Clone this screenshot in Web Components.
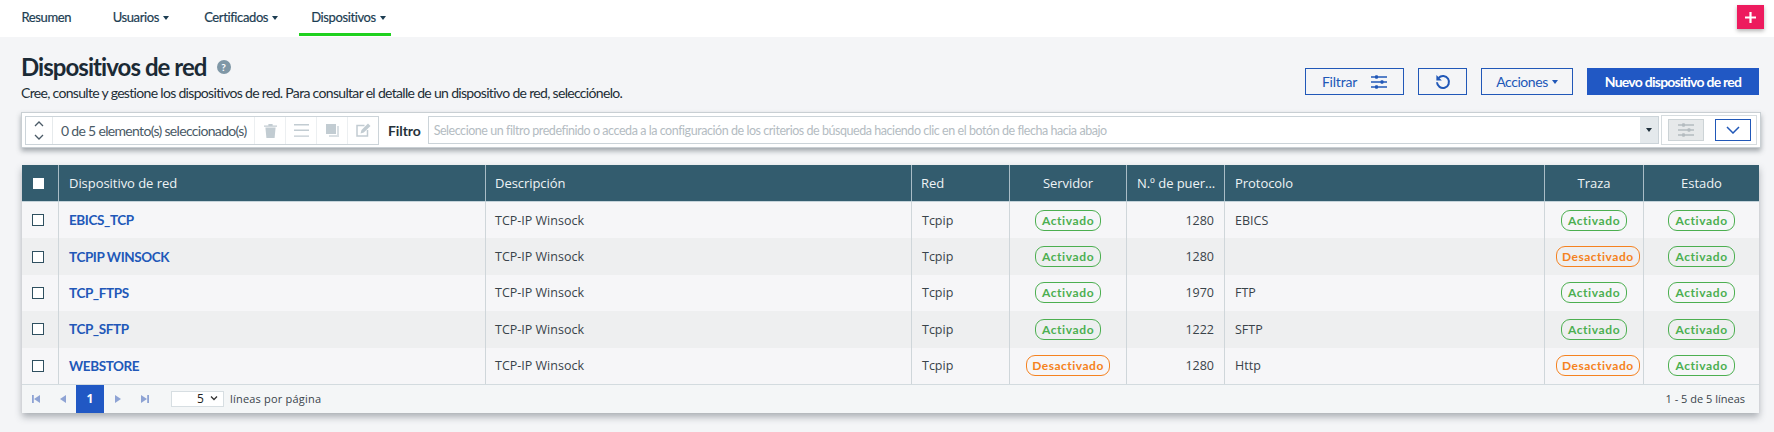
<!DOCTYPE html>
<html lang="es"><head><meta charset="utf-8"><title>Dispositivos de red</title>
<style>
html,body{margin:0;padding:0;height:432px;overflow:hidden;background:#f4f5f7;font-family:"Lato","Liberation Sans",sans-serif;}
x-app{display:block}
</style></head><body>
<x-app>
  <x-nav>
    <x-nav-item style="margin-right:16.5px">Resumen</x-nav-item>
    <x-nav-item caret style="margin-right:16.6px">Usuarios</x-nav-item>
    <x-nav-item caret style="margin-right:15px">Certificados</x-nav-item>
    <x-nav-item caret active>Dispositivos</x-nav-item>
  </x-nav>
  <x-page>
    <x-page-head heading="Dispositivos de red" text="Cree, consulte y gestione los dispositivos de red. Para consultar el detalle de un dispositivo de red, selecciónelo.">
      <x-btn style="width:99px"><span style="letter-spacing:-.2px">Filtrar</span><x-icon name="sliders" style="margin-left:14px"></x-icon></x-btn>
      <x-btn style="width:49px"><x-icon name="undo"></x-icon></x-btn>
      <x-btn style="width:92px" caret>Acciones</x-btn>
      <x-btn style="width:172px" primary>Nuevo dispositivo de red</x-btn>
    </x-page-head>
    <x-toolbar></x-toolbar>
    <x-grid>
      <x-row name="EBICS_TCP" port="1280" proto="EBICS" server="1" trace="1"></x-row>
      <x-row name="TCPIP WINSOCK" port="1280" proto="" server="1" trace="0"></x-row>
      <x-row name="TCP_FTPS" port="1970" proto="FTP" server="1" trace="1"></x-row>
      <x-row name="TCP_SFTP" port="1222" proto="SFTP" server="1" trace="1"></x-row>
      <x-row name="WEBSTORE" port="1280" proto="Http" server="0" trace="0"></x-row>
    </x-grid>
  </x-page>
</x-app>
<script>
const ICONS={
 sliders:'<svg width="16" height="14" viewBox="0 0 16 14"><g fill="none" stroke="currentColor" stroke-width="1.6"><path d="M0 2h16M0 7h16M0 12h16"/></g><g fill="currentColor"><rect x="4" y=".2" width="3" height="3.6" rx="1"/><rect x="9.5" y="5.2" width="3" height="3.6" rx="1"/><rect x="4" y="10.2" width="3" height="3.6" rx="1"/></g></svg>',
 undo:'<svg width="16" height="16" viewBox="0 0 16 16"><path d="M3.6 3.9A6 6 0 1 1 2 8.2" fill="none" stroke="currentColor" stroke-width="2"/><path d="M1.4 1v5.4h5.4z" fill="currentColor"/></svg>',
 trash:'<svg width="13" height="15" viewBox="0 0 13 15" fill="currentColor"><path d="M0 2.4h13v1.4H0zM4.4 1h4.2v1.4H4.4zM1.4 4.6h10.2L10.6 15H2.4z"/></svg>',
 lines:'<svg width="15" height="13" viewBox="0 0 15 13" fill="currentColor"><path d="M0 0h15v1.4H0zM0 5.6h15V7H0zM0 11.4h15v1.4H0z"/></svg>',
 copy:'<svg width="13" height="13" viewBox="0 0 13 13" fill="currentColor"><path d="M0 0h10v10H0z"/><path d="M11 2h2v11H3v-2h8z" opacity=".6"/></svg>',
 edit:'<svg width="15" height="14" viewBox="0 0 15 14"><path d="M8.5 2.5H1v10.5h10.500V7" fill="none" stroke="currentColor" stroke-width="1.5"/><path d="M4.5 10.500l1-3.500L12 .5l2.500 2.500L7.800 9.500z" fill="currentColor"/></svg>',
 up:'<svg width="10" height="6" viewBox="0 0 10 6"><path d="M1 5l4-4 4 4" fill="none" stroke="currentColor" stroke-width="1.300"/></svg>',
 down:'<svg width="10" height="6" viewBox="0 0 10 6"><path d="M1 1l4 4 4-4" fill="none" stroke="currentColor" stroke-width="1.300"/></svg>',
 chev:'<svg width="14" height="8" viewBox="0 0 14 8"><path d="M1 1l6 6 6-6" fill="none" stroke="currentColor" stroke-width="1.500"/></svg>',
 first:'<svg width="8" height="8" viewBox="0 0 8 8" fill="currentColor"><path d="M0 0h1.800v8H0zM8 0v8L2 4z"/></svg>',
 prev:'<svg width="6" height="8" viewBox="0 0 6 8" fill="currentColor"><path d="M6 0v8L0 4z"/></svg>',
 next:'<svg width="6" height="8" viewBox="0 0 6 8" fill="currentColor"><path d="M0 0v8l6-4z"/></svg>',
 last:'<svg width="8" height="8" viewBox="0 0 8 8" fill="currentColor"><path d="M8 0H6.200v8H8zM0 0v8l6-4z"/></svg>'
};
function def(name,css,html){
  customElements.define(name,class extends HTMLElement{
    connectedCallback(){
      if(this.shadowRoot)return;
      const r=this.attachShadow({mode:'open'});
      r.innerHTML='<style>'+css+'</style>'+(typeof html==='function'?html(this):html);
    }
  });
}
def('x-icon',':host{display:inline-flex;align-items:center;justify-content:center;line-height:0}',h=>ICONS[h.getAttribute('name')]);
def('x-nav',`:host{display:flex;height:37px;background:#fff;padding-left:9px;box-sizing:border-box;position:relative}
 .fab{position:absolute;left:1737px;top:5px;width:27px;height:24px;background:#ed1b5e;color:#fff;display:flex;align-items:center;justify-content:center;box-shadow:0 2px 4px rgba(0,0,0,.3)}`,
 '<slot></slot><div class="fab"><svg width="11" height="11" viewBox="0 0 11 11"><path d="M5.500 0v11M0 5.500h11" stroke="#fff" stroke-width="2.200"/></svg></div>');
def('x-nav-item',`:host{display:block;height:36px;box-sizing:border-box;padding:0 12.5px;font:400 13px/35px Lato,sans-serif;color:#1c3d52;letter-spacing:-.38px;white-space:nowrap;-webkit-text-stroke:.2px #1c3d52}
 :host([caret]){padding-right:6px}
 :host([active]){border-bottom:3px solid #1fd11f;padding-left:12px;padding-right:5px}
 .c{display:inline-block;border:3px solid transparent;border-top:4px solid #1c3d52;border-bottom:0;margin-left:4px;vertical-align:2px}`,
 h=>'<span class="t"><slot></slot></span>'+(h.hasAttribute('caret')?'<span class="c"></span>':''));
def('x-page',':host{display:block;padding:0 14px 0 21px}','<slot></slot>');
def('x-page-head',`:host{display:flex;height:75px;box-sizing:border-box;justify-content:space-between;align-items:flex-start}
 h1{margin:16px 0 0;font:700 24px/28px Lato,sans-serif;color:#1b2a35;letter-spacing:-.95px;display:flex;align-items:center}
 .q{margin-left:10px;width:14px;height:14px;border-radius:50%;background:#7f97a6;color:#fff;font:700 10px/14px Lato,sans-serif;text-align:center;letter-spacing:0}
 p{margin:3px 0 0;font:400 14px/18px Lato,sans-serif;color:#222e36;letter-spacing:-.68px}
 .a{display:flex;gap:14px;margin:31px 1px 0 0}`,
 h=>`<div><h1>${h.getAttribute('heading')}<span class="q">?</span></h1><p>${h.getAttribute('text')}</p></div><div class="a"><slot></slot></div>`);
def('x-btn',`:host{display:inline-flex;align-items:center;justify-content:center;height:27px;box-sizing:border-box;border:1px solid #2158b8;color:#2158b8;font:400 14px/25px Lato,sans-serif;letter-spacing:-.45px;white-space:nowrap}
 :host([primary]){background:#2158c4;color:#fff;font-weight:700;border-color:#2158c4;letter-spacing:-.75px}
 .c{display:inline-block;border:3.500px solid transparent;border-top:4px solid currentColor;border-bottom:0;margin-left:4px;vertical-align:1px}`,
 h=>'<slot></slot>'+(h.hasAttribute('caret')?'<span class="c"></span>':''));
def('x-toolbar',`:host{display:flex;align-items:center;height:36px;box-sizing:border-box;margin-right:-1px;background:#fff;border:1px solid #c9cfd3;padding:0 3px;box-shadow:0 3px 5px rgba(60,70,80,.45);font:400 14px Lato,sans-serif}
 .sel{display:flex;align-items:center;height:29px;box-sizing:border-box;width:354px;border:1px solid #ccd4d9;color:#46515a;flex:none}
 .arrows{width:26px;height:100%;display:flex;flex-direction:column;align-items:center;justify-content:center;gap:7px;color:#4a5a66;border-right:1px solid #e6eaec;flex:none}
 .count{flex:1;padding-left:8px;font-size:14px;letter-spacing:-.68px;color:#4a5a66;white-space:nowrap;min-width:0}
 .tb{width:31px;height:100%;display:flex;align-items:center;justify-content:center;color:#c2ccd2;border-left:1px solid #eceff1;box-sizing:border-box;flex:none}
 label{margin:0 7px 0 9px;font:700 14px Lato,sans-serif;color:#26323a;letter-spacing:-.1px}
 .inp{flex:1;display:flex;height:28px;box-sizing:border-box;border:1px solid #ccd4d9;min-width:0;align-items:center;font:400 12.5px Lato,sans-serif;color:#b4bcc2;padding-left:5px;position:relative;white-space:nowrap;letter-spacing:-.45px}
 .drop{position:absolute;right:0;top:0;bottom:0;width:18px;background:#e4e9ec;display:flex;align-items:center;justify-content:center}
 .drop i{border:3.500px solid transparent;border-top:4px solid #20303c;border-bottom:0}
 .rt{margin-left:2px;width:96px;height:30px;box-sizing:border-box;border:1px solid #d6dcdf;display:flex;align-items:center;padding-left:6px;gap:11px;flex:none}
 .f{width:36px;height:22px;box-sizing:border-box;border:1px solid #ccd3d6;background:#e6e9ea;color:#b4bcc0;display:flex;align-items:center;justify-content:center}
 .g{width:36px;height:22px;box-sizing:border-box;border:1px solid #2158b8;color:#2158b8;display:flex;align-items:center;justify-content:center}`,
 `<div class="sel"><div class="arrows"><x-icon name="up"></x-icon><x-icon name="down"></x-icon></div><div class="count">0 de 5 elemento(s) seleccionado(s)</div>
  <div class="tb"><x-icon name="trash"></x-icon></div><div class="tb"><x-icon name="lines"></x-icon></div><div class="tb"><x-icon name="copy"></x-icon></div><div class="tb"><x-icon name="edit"></x-icon></div></div>
  <label>Filtro</label>
  <div class="inp">Seleccione un filtro predefinido o acceda a la configuración de los criterios de búsqueda haciendo clic en el botón de flecha hacia abajo<div class="drop"><i></i></div></div>
  <div class="rt"><div class="f"><x-icon name="sliders"></x-icon></div><div class="g"><x-icon name="chev"></x-icon></div></div>`);
const COLS=[37,427,426,98,117,98,320,99,115];
const TPL=COLS.map(w=>w+'px').join(' ');
def('x-grid',`:host{display:block;margin:17px 1px 0;box-shadow:0 4px 7px rgba(60,70,80,.4);font-family:"Open Sans",sans-serif}
 .h{display:grid;grid-template-columns:${TPL};height:37px;background:#335c6e;color:#eef3f5;font:400 13px/37px "Open Sans",sans-serif;border-bottom:1px solid #c5d3da;box-sizing:border-box}
 .h>div{border-right:1px solid #a9bcc6;padding:0 10px;white-space:nowrap;overflow:hidden;box-sizing:border-box;letter-spacing:-.05px}
 .h>div:nth-child(3),.h>div:nth-child(4){padding-left:9px}
 .h>div:last-child{border-right:0}
 .c{text-align:center} .cb{display:flex;align-items:center;justify-content:flex-start;padding:0 0 0 11px!important}
 .cb i{width:11px;height:11px;background:#fff;display:block}
 .pg{display:flex;align-items:center;height:29px;background:#f4f6f7;border-top:1px solid #d3dbdf;box-sizing:border-box;font:400 11px "Open Sans",sans-serif;color:#3a444b;letter-spacing:.2px}
 .pb{width:27px;text-align:center;color:#8ea3d4;display:flex;justify-content:center}
 .cur{width:28px;height:28px;background:#2158c4;color:#fff;font:700 12px/28px "Open Sans",sans-serif;text-align:center}
 .s{margin-left:13px;width:53px;height:16px;box-sizing:border-box;background:#fff;border:1px solid #d7dee2;display:flex;align-items:center;justify-content:flex-end;color:#222;padding-right:5px;gap:6px;font-size:12px}
 .s i{color:#333;display:flex}
 .l{margin-left:6px}.r{margin-left:auto;padding-right:14px;letter-spacing:0}`,
 `<div class="h"><div class="cb"><i></i></div><div>Dispositivo de red</div><div>Descripción</div><div>Red</div><div class="c">Servidor</div><div>N.º de puer...</div><div>Protocolo</div><div class="c">Traza</div><div class="c">Estado</div></div>
 <slot></slot>
 <div class="pg"><div class="pb"><x-icon name="first"></x-icon></div><div class="pb"><x-icon name="prev"></x-icon></div><div class="cur">1</div><div class="pb"><x-icon name="next"></x-icon></div><div class="pb"><x-icon name="last"></x-icon></div>
 <div class="s">5<i><svg width="8" height="5" viewBox="0 0 8 5"><path d="M1 .5l3 3 3-3" fill="none" stroke="currentColor" stroke-width="1.300"/></svg></i></div><div class="l">líneas por página</div><div class="r">1 - 5 de 5 líneas</div></div>`);
def('x-pill',`:host{display:inline-block;flex:none;box-sizing:border-box;height:21px;border-radius:9px;border:1px solid #4caf50;color:#4caf50;font:700 12px/19px Lato,sans-serif;letter-spacing:.6px;padding:0 6px;white-space:nowrap}
 :host([off]){border-color:#f58220;color:#f58220;letter-spacing:.5px;padding:0 5px}`,'<slot></slot>');
def('x-row',`:host{display:grid;grid-template-columns:${TPL};height:36.4px;background:#f6f6f8;color:#39434a;font:400 12.5px "Open Sans",sans-serif}
 :host(:nth-of-type(even)){background:#eeeff0}
 div{display:flex;align-items:center;padding:0 10px;box-sizing:border-box;border-right:1px solid #cfd6da;white-space:nowrap}
 div:nth-child(3),div:nth-child(4){padding-left:9px}
 div:last-child{border-right:0}
 .c{justify-content:safe center;padding:0 11px}
 .e{justify-content:flex-end}
 .cb{justify-content:flex-start;padding:0 0 0 10px}
 .cb i{width:12px;height:12px;box-sizing:border-box;border:1px solid #2f5060;background:#fff;display:block}
 a{font:700 13.500px "Lato",sans-serif;color:#2158b8;letter-spacing:-.4px;margin-left:1px}`,
 h=>{const p=v=>v==='1'?'<x-pill>Activado</x-pill>':'<x-pill off>Desactivado</x-pill>';
  return `<div class="cb"><i></i></div><div><a>${h.getAttribute('name')}</a></div><div>TCP-IP Winsock</div><div>Tcpip</div><div class="c">${p(h.getAttribute('server'))}</div><div class="e">${h.getAttribute('port')}</div><div>${h.getAttribute('proto')}</div><div class="c">${p(h.getAttribute('trace'))}</div><div class="c">${p('1')}</div>`});
</script>
</body></html>
